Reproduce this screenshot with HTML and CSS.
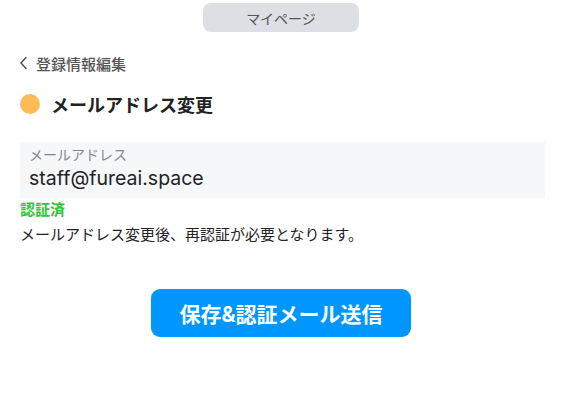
FILE: index.html
```html
<!DOCTYPE html>
<html lang="ja">
<head>
<meta charset="utf-8">
<link rel="stylesheet" href="styles.css">
</head>
<body>
<div class="page">
  <div class="tabbar"><div class="tab">マイページ</div></div>
  <a class="back" href="#">
    <svg class="chev" width="10" height="14" viewBox="0 0 10 14"><path d="M7 1.5 L2 7 L7 12.5" fill="none" stroke="#555" stroke-width="1.6" stroke-linecap="round" stroke-linejoin="round"/></svg>
    <span>登録情報編集</span>
  </a>
  <h1 class="title"><span class="dot"></span>メールアドレス変更</h1>
  <div class="field">
    <div class="label">メールアドレス</div>
    <div class="value">staff@fureai.space</div>
  </div>
  <div class="verified">認証済</div>
  <p class="note">メールアドレス変更後、再認証が必要となります。</p>
  <div class="actions"><button class="btn">保存&amp;認証メール送信</button></div>
</div>
</body>
</html>
```
FILE: styles.css
```css
* { box-sizing: border-box; }
html, body { margin: 0; padding: 0; background: #fff; }
body { font-family: Inter, "Noto Sans CJK JP", sans-serif; color: #222; }
.page { padding: 3px 33px 0 20px; }
.tabbar { display: flex; justify-content: center; padding-right: 3px; }
.tab { width: 156px; height: 29px; border-radius: 8px; background: #dce0e4; color: #555; font-size: 14px; display: flex; align-items: center; justify-content: center; }
.back { display: flex; align-items: center; gap: 7px; margin-top: 20px; height: 22px; color: #555; text-decoration: none; font-size: 15px; font-weight: 500; }
.chev { margin-left: -1px; }
.title { display: flex; align-items: center; gap: 11px; margin: 17px 0 0; font-size: 18px; font-weight: 700; color: #222; height: 26px; }
.dot { width: 20px; height: 20px; border-radius: 50%; background: #fdbb55; }
.field { margin-top: 25px; background: #f6f7f9; height: 56px; padding: 3px 9px 0; }
.label { font-size: 14px; color: #888; line-height: 19px; }
.value { font-size: 19.5px; line-height: 28px; color: #222; }
.verified { margin-top: 1px; font-size: 15px; font-weight: 700; color: #33c433; line-height: 22px; }
.note { margin: 4px 0 0; font-size: 15px; line-height: 20px; color: #222; }
.actions { display: flex; justify-content: center; margin-top: 44px; padding-right: 3px; }
.btn { width: 260px; height: 48px; border: none; border-radius: 9px; background: #0096ff; color: #fff; font-family: inherit; font-size: 21px; font-weight: 700; }
```
